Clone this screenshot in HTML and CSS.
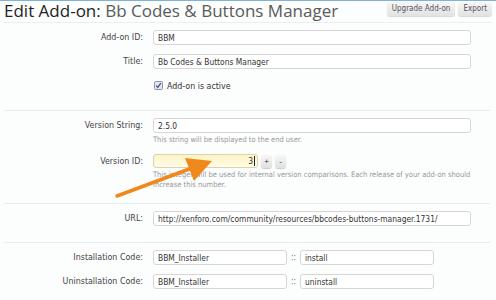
FILE: index.html
```html
<!DOCTYPE html>
<html lang="en">
<head>
    <meta charset="UTF-8">
    <title>Edit Add-on</title>
    <link rel="stylesheet" href="styles.css">
</head>
<body>

    <div class="topline"></div>

    <header class="page-head">
        <h1>Edit Add-on: <span>Bb Codes &amp; Buttons Manager</span></h1>
        <div class="actions">
            <a class="btn" href="#">Upgrade Add-on</a>
            <a class="btn" href="#">Export</a>
        </div>
    </header>

    <form class="form">
        <div class="row">
            <label class="label">Add-on ID:</label>
            <div class="field"><input class="text" type="text" value="BBM"></div>
        </div>
        <div class="row">
            <label class="label">Title:</label>
            <div class="field"><input class="text" type="text" value="Bb Codes &amp; Buttons Manager"></div>
        </div>
        <div class="row check-row">
            <span class="label"></span>
            <div class="field">
                <label class="check">
                    <svg class="box" width="9" height="9" viewBox="0 0 9 9">
                        <rect x="0.5" y="0.5" width="8" height="8" rx="1" fill="#e4e5ee" stroke="#8f93a6"/>
                        <path d="M2.2 4.6 L3.8 6.4 L6.8 2.2" fill="none" stroke="#3a4a8c" stroke-width="1.2"/>
                    </svg>
                    Add-on is active
                </label>
            </div>
        </div>

        <div class="sep"></div>

        <div class="row">
            <label class="label">Version String:</label>
            <div class="field">
                <input class="text" type="text" value="2.5.0">
                <p class="hint">This string will be displayed to the end user.</p>
            </div>
        </div>
        <div class="row row-last-hint">
            <label class="label">Version ID:</label>
            <div class="field">
                <div class="spin">
                    <div class="text num">3<span class="caret"></span></div>
                    <button type="button" class="spin-btn">+</button>
                    <button type="button" class="spin-btn">-</button>
                </div>
                <p class="hint">This integer will be used for internal version comparisons. Each release of your add-on should increase this number.</p>
            </div>
        </div>

        <div class="sep"></div>

        <div class="row">
            <label class="label">URL:</label>
            <div class="field"><input class="text" type="text" value="http://xenforo.com/community/resources/bbcodes-buttons-manager.1731/"></div>
        </div>

        <div class="sep"></div>

        <div class="row">
            <label class="label">Installation Code:</label>
            <div class="field callback">
                <input class="text" type="text" value="BBM_Installer">
                <span class="colons">::</span>
                <input class="text" type="text" value="install">
            </div>
        </div>
        <div class="row">
            <label class="label">Uninstallation Code:</label>
            <div class="field callback">
                <input class="text" type="text" value="BBM_Installer">
                <span class="colons">::</span>
                <input class="text" type="text" value="uninstall">
            </div>
        </div>
    </form>

    <!-- annotation arrow drawn over the form -->
    <svg class="arrow" width="496" height="300" viewBox="0 0 496 300">
        <line x1="117" y1="196" x2="192" y2="168" stroke="#f0891c" stroke-width="3.5" stroke-linecap="round"/>
        <polygon points="212,161 185,158 194,181" fill="#f0891c"/>
    </svg>

</body>
</html>
```

FILE: styles.css
```css
body {
    margin: 0;
    background: #fcfdfd;
    color: #444;
    font-family: "DejaVu Sans Condensed", "DejaVu Sans", sans-serif;
    font-size: 8px;
    position: relative;
    width: 496px;
    height: 300px;
    overflow: hidden;
}

.topline {
    height: 1px;
    background: #7fb2d6;
}

.page-head {
    display: flex;
    justify-content: space-between;
    align-items: flex-start;
    height: 21px;
    margin: 0 4px 0 4px;
    border-bottom: 1px solid #e9eff2;
}

.page-head h1 {
    margin: 0;
    font-family: "Open Sans", sans-serif;
    font-weight: normal;
    font-size: 17px;
    line-height: 19px;
    color: #222;
}

.page-head h1 span {
    color: #5a5a5a;
}

.actions {
    display: flex;
    gap: 3px;
    margin-top: 1px;
}

.btn {
    display: block;
    padding: 0 5px;
    height: 14px;
    line-height: 14px;
    font-size: 8px;
    color: #555;
    text-decoration: none;
    background: linear-gradient(#f6f6f6, #e2e2e2);
    border-radius: 3px;
    box-shadow: 0 1px 1px rgba(0, 0, 0, 0.15);
}

.form {
    display: flex;
    flex-direction: column;
    margin: 0 6px 0 4px;
    padding-top: 7px;
}

.row {
    display: grid;
    grid-template-columns: 139px 1fr;
    column-gap: 10px;
    margin-bottom: 9px;
}

.label {
    text-align: right;
    line-height: 15px;
    font-size: 8.85px;
    color: #444;
}

.text {
    box-sizing: border-box;
    width: 318px;
    height: 15px;
    margin: 0;
    padding: 0 4px;
    border: 1px solid #d6d6d6;
    border-radius: 3px;
    background: #fff;
    font-family: inherit;
    font-size: 8.4px;
    color: #333;
    display: block;
}

.check-row {
    margin-bottom: 10px;
}

.check {
    display: flex;
    align-items: center;
    gap: 4px;
    height: 15px;
    font-size: 8.8px;
    color: #333;
}

.box {
    margin-left: 1px;
}

.sep {
    border-top: 1px solid #e3eef2;
    margin: 7px 0 7px;
}

.row-last-hint {
    margin-bottom: 6px;
}

.hint {
    margin: 2px 0 0;
    font-size: 7.5px;
    line-height: 10px;
    color: #999;
}

.spin {
    display: flex;
    align-items: center;
    gap: 3px;
}

.num {
    width: 105px;
    height: 14px;
    line-height: 12px;
    padding-right: 2px;
    text-align: right;
    background: linear-gradient(#fff3c4, #fffbe6);
    border-color: #d9d3b0;
}

.caret {
    display: inline-block;
    width: 1px;
    height: 10px;
    margin-left: 1px;
    vertical-align: -2px;
    background: #222;
}

.spin-btn {
    width: 11px;
    height: 13px;
    padding: 0;
    border: none;
    border-radius: 3px;
    background: linear-gradient(#f7f7f7, #e0e0e0);
    box-shadow: 0 1px 1px rgba(0, 0, 0, 0.2);
    font-size: 8px;
    color: #333;
}

.callback {
    display: flex;
    align-items: center;
}

.callback .text {
    width: 134px;
}

.colons {
    width: 13px;
    text-align: center;
    color: #666;
}

.arrow {
    position: absolute;
    left: 0;
    top: 0;
    pointer-events: none;
}
```
